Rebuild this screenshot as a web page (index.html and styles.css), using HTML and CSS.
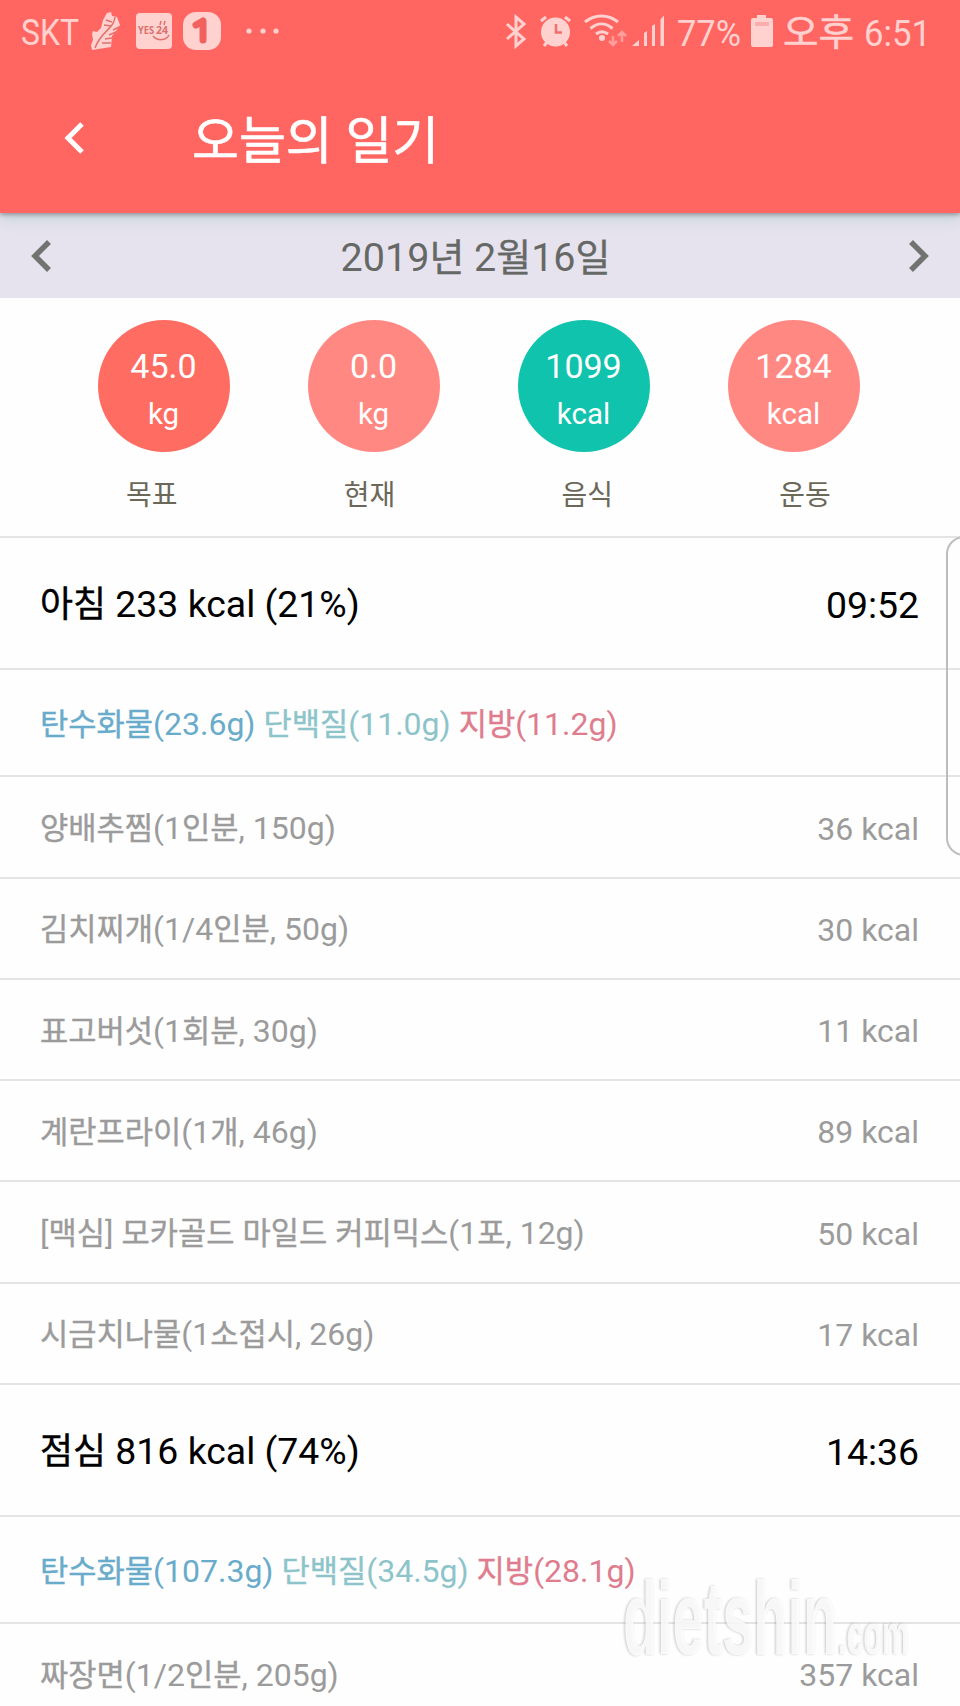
FILE: index.html
```html
<!DOCTYPE html>
<html lang="ko">
<head>
  <meta charset="UTF-8">
  <title>오늘의 일기</title>
  <link rel="stylesheet" href="styles.css">
</head>
<body>
  <header class="header">
    <div class="status">
      <svg class="status-left" width="300" height="64" viewBox="0 0 300 64">
        <text x="21" y="44.500" textLength="58" lengthAdjust="spacingAndGlyphs">SKT</text>
        <!-- shoe -->
        <path d="M107 13l4-1 1 4 5 1 3 8-4 6-4 5-1 11-19 3-1-5 2-5-1-6 1-3 4 1 4-4 2-8z"/>
        <path class="cut" d="M115 17c-1 12-14 14-20 31M106 20l6 2M104 25l7 1M113 30l6-3M109 35l7-3M105 39l7-1M102 43l9 0"/>
        <!-- yes24 -->
        <rect x="136" y="13" width="36" height="36" rx="4"/>
        <text class="yes" x="138" y="34" textLength="16" lengthAdjust="spacingAndGlyphs">YES</text>
        <text class="yes" x="156" y="34" textLength="12" lengthAdjust="spacingAndGlyphs">24</text>
        <path class="smile" d="M153 36c4 5 13 5 16-1M160 25l1-4M164 25l1-4"/>
        <!-- 1 badge -->
        <rect x="183" y="12" width="38" height="38" rx="13"/>
        <path class="one" d="M196 25l7-4v19"/>
        <circle cx="249" cy="31" r="2.600"/><circle cx="263" cy="31" r="2.600"/><circle cx="276" cy="31" r="2.600"/>
      </svg>
      <svg class="status-right" width="460" height="64" viewBox="500 0 460 64">
        <path class="line" d="M507 24l17 15-8 7V17l8 7-17 15"/>
        <!-- alarm -->
        <circle cx="555.500" cy="32" r="14.500"/>
        <path class="line" d="M541 21l5-4M570 21l-5-4M547 42l-3 4M564 42l3 4"/>
        <path class="hand" d="M556 24v8.500h6"/>
        <!-- wifi -->
        <path class="line" d="M585 22c10-8 23-8 33 0M590.500 28.500c7-6 15-6 22 0M596 34c4-3 8-3 12 0"/>
        <circle cx="602" cy="38" r="3"/>
        <path class="arrows" d="M613 36v8M609 41l4 4 4-4M622 42v-9M618 36l4-4 4 4"/>
        <!-- signal -->
        <path d="M632 46l7-6v6zM644 33l3-2v15h-3zM652 26l3-2v22h-3zM660.500 19.500l3.500-4v30.500h-3.500z"/>
        <text x="677" y="46" textLength="64" lengthAdjust="spacingAndGlyphs">77%</text>
        <path d="M757 15h9v3h5q2 0 2 2v25q0 2-2 2h-18q-2 0-2-2V20q0-2 2-2h4z"/>
        <rect class="level" x="755" y="22" width="14" height="4"/>
        <text class="ampm" x="783" y="46" textLength="71" lengthAdjust="spacingAndGlyphs">오후</text>
        <text x="864" y="46" textLength="67" lengthAdjust="spacingAndGlyphs">6:51</text>
      </svg>
    </div>
    <div class="titlebar">
      <svg class="back" width="22" height="34" viewBox="0 0 22 34"><path d="M18 3L4 17l14 14"/></svg>
      <h1>오늘의 일기</h1>
    </div>
  </header>

  <nav class="date">
    <svg width="22" height="34" viewBox="0 0 22 34"><path d="M18 3L4 17l14 14"/></svg>
    <span>2019<i>년</i> 2<i>월</i>16<i>일</i></span>
    <svg width="22" height="34" viewBox="0 0 22 34"><path d="M4 3l14 14L4 31"/></svg>
  </nav>

  <section class="summary">
    <div class="circles">
      <div class="circle goal"><b>45.0</b><span>kg</span></div>
      <div class="circle"><b>0.0</b><span>kg</span></div>
      <div class="circle food"><b>1099</b><span>kcal</span></div>
      <div class="circle"><b>1284</b><span>kcal</span></div>
    </div>
    <div class="labels">
      <span>목표</span><span>현재</span><span>음식</span><span>운동</span>
    </div>
  </section>

  <main class="meals">
    <div class="row meal"><span><i>아침</i> 233 kcal (21%)</span><span>09:52</span></div>
    <div class="row nutrients">
      <span><span class="carb"><i>탄수화물</i>(23.6g)</span> <span class="protein"><i>단백질</i>(11.0g)</span> <span class="fat"><i>지방</i>(11.2g)</span></span>
    </div>
    <div class="row"><span><i>양배추찜</i>(1<i>인분</i>, 150g)</span><span>36 kcal</span></div>
    <div class="row"><span><i>김치찌개</i>(1/4<i>인분</i>, 50g)</span><span>30 kcal</span></div>
    <div class="row"><span><i>표고버섯</i>(1<i>회분</i>, 30g)</span><span>11 kcal</span></div>
    <div class="row"><span><i>계란프라이</i>(1<i>개</i>, 46g)</span><span>89 kcal</span></div>
    <div class="row"><span>[<i>맥심</i>] <i>모카골드</i> <i>마일드</i> <i>커피믹스</i>(1<i>포</i>, 12g)</span><span>50 kcal</span></div>
    <div class="row"><span><i>시금치나물</i>(1<i>소접시</i>, 26g)</span><span>17 kcal</span></div>
    <div class="row meal"><span><i>점심</i> 816 kcal (74%)</span><span>14:36</span></div>
    <div class="row nutrients">
      <span><span class="carb"><i>탄수화물</i>(107.3g)</span> <span class="protein"><i>단백질</i>(34.5g)</span> <span class="fat"><i>지방</i>(28.1g)</span></span>
    </div>
    <div class="row"><span><i>짜장면</i>(1/2<i>인분</i>, 205g)</span><span>357 kcal</span></div>
    <div class="edge-panel"></div>
  </main>

  <svg class="watermark" width="320" height="130" viewBox="0 0 320 130">
    <text x="7" y="84" font-size="104" textLength="214" lengthAdjust="spacingAndGlyphs">dietshin</text>
    <text x="222" y="84" font-size="58" textLength="71" lengthAdjust="spacingAndGlyphs">.com</text>
  </svg>
</body>
</html>
```
FILE: styles.css
```css
* {
  box-sizing: border-box;
}

body {
  margin: 0;
  position: relative;
  width: 960px;
  height: 1706px;
  overflow: hidden;
  background: #fefefe;
  font-family: Roboto, "Noto Sans CJK KR", sans-serif;
}

/* hangul is set a little smaller and heavier than the digits */
i {
  font-style: normal;
  font-size: 0.96em;
  -webkit-text-stroke: 0.4px currentColor;
}

.header {
  position: relative;
  z-index: 1;
  height: 213px;
  background: #ff6662;
  box-shadow: 0 2px 4px rgba(80, 80, 80, 0.45), 0 6px 14px rgba(150, 190, 190, 0.4);
}

.status {
  display: flex;
  justify-content: space-between;
  height: 64px;
  font-size: 37px;
}

.status svg {
  fill: #ffd1cf;
}

.status .yes {
  font-family: "Open Sans", sans-serif;
  font-size: 10px;
  font-weight: bold;
  fill: #d9706c;
}

.status .ampm {
  stroke: #ffd1cf;
  stroke-width: 0.6;
}

.status .level {
  fill: #f9aeab;
}

.status .smile,
.status .cut {
  fill: none;
  stroke: #e2716d;
  stroke-width: 1.5;
}

.status .one {
  fill: none;
  stroke: #f1625e;
  stroke-width: 7;
  stroke-linecap: round;
  stroke-linejoin: round;
}

.status .line {
  fill: none;
  stroke: #ffd1cf;
  stroke-width: 3;
}

.status .hand {
  fill: none;
  stroke: #f1706c;
  stroke-width: 2.5;
}

.status .arrows {
  fill: none;
  stroke: #ff9f9c;
  stroke-width: 2.5;
}

.titlebar {
  display: flex;
  align-items: center;
  height: 147px;
  padding: 0 0 0 64px;
}

.titlebar h1 {
  margin: 8px 0 0 106px;
  color: #fff;
  font-size: 51px;
  font-weight: 400;
  line-height: 60px;
  -webkit-text-stroke: 0.6px #fff;
}

.back {
  fill: none;
  stroke: #fff;
  stroke-width: 5;
}

.date {
  display: flex;
  align-items: center;
  justify-content: space-between;
  height: 85px;
  padding: 0 31px;
  background: #e6e3ee;
  color: #666866;
  font-size: 39.5px;
  line-height: 50px;
}

.date span {
  padding: 4px 9px 0 0;
}

.date svg {
  fill: none;
  stroke: #70736f;
  stroke-width: 5.5;
}

.summary {
  height: 238px;
  padding-top: 22px;
}

.circles {
  display: flex;
  gap: 78px;
  padding-left: 98px;
}

.circle {
  display: flex;
  flex-direction: column;
  align-items: center;
  width: 132px;
  height: 132px;
  padding: 22px 1px 0 0;
  border-radius: 50%;
  background: #ff8883;
  color: #fff;
  font-size: 29.5px;
  line-height: 48px;
}

.circle b {
  font-size: 34px;
  font-weight: 400;
}

.circle.goal {
  background: #ff6c61;
}

.circle.food {
  background: #10c3ad;
}

.labels {
  display: grid;
  grid-template-columns: repeat(4, 1fr);
  margin-top: 22px;
  padding: 0 46px 0 43px;
  color: #6b6759;
  font-size: 28px;
  line-height: 44px;
  text-align: center;
}

.meals {
  position: relative;
}

.row {
  display: flex;
  align-items: center;
  justify-content: space-between;
  height: 101.25px;
  padding: 3px 41px 0 40px;
  border-top: 2px solid #e4e4e4;
  color: #9b9b9b;
  font-size: 32px;
  line-height: 40px;
}

.row.meal {
  height: 132.4px;
  color: #000;
  font-size: 37.4px;
}

.row.nutrients {
  height: 107px;
}

.carb {
  color: #68abca;
}

.protein {
  color: #8dc4ca;
}

.fat {
  color: #df7c8d;
}

/* handle of the edge panel, runs off the right side */
.edge-panel {
  position: absolute;
  top: 0;
  left: 946px;
  width: 40px;
  height: 320px;
  border: 2px solid #bdbdbd;
  border-radius: 18px;
}

.watermark {
  position: absolute;
  left: 616px;
  top: 1570px;
  fill: #fff;
  fill-opacity: 0.85;
  font-family: "Liberation Sans", sans-serif;
  font-weight: bold;
  filter: drop-shadow(-1px 0 1px rgba(0, 0, 0, 0.25));
}
```
